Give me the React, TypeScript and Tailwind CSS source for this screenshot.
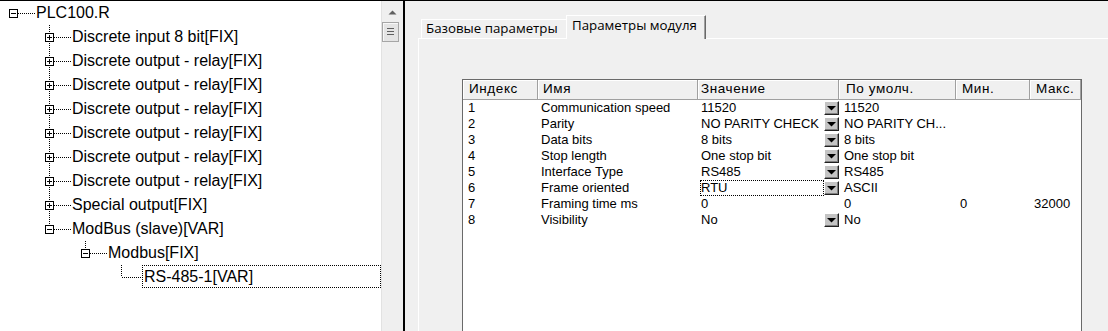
import React from "react";

type Row = {
  label: string;
  level: number;
  box: "plus" | "minus" | null;
  line: "full" | "top" | "none";
  selected?: boolean;
};

const treeRows: Row[] = [
  { label: "PLC100.R", level: 0, box: "minus", line: "none" },
  { label: "Discrete input 8 bit[FIX]", level: 1, box: "plus", line: "full" },
  { label: "Discrete output - relay[FIX]", level: 1, box: "plus", line: "full" },
  { label: "Discrete output - relay[FIX]", level: 1, box: "plus", line: "full" },
  { label: "Discrete output - relay[FIX]", level: 1, box: "plus", line: "full" },
  { label: "Discrete output - relay[FIX]", level: 1, box: "plus", line: "full" },
  { label: "Discrete output - relay[FIX]", level: 1, box: "plus", line: "full" },
  { label: "Discrete output - relay[FIX]", level: 1, box: "plus", line: "full" },
  { label: "Special output[FIX]", level: 1, box: "plus", line: "full" },
  { label: "ModBus (slave)[VAR]", level: 1, box: "minus", line: "top" },
  { label: "Modbus[FIX]", level: 2, box: "minus", line: "top" },
  { label: "RS-485-1[VAR]", level: 3, box: null, line: "top", selected: true },
];

function Connector({ box, line }: { box: Row["box"]; line: Row["line"] }) {
  return (
    <svg width="36" height="24" className="block shrink-0">
      {line !== "none" && (
        <line
          x1="13.5"
          y1="0"
          x2="13.5"
          y2={line === "full" ? 24 : 12}
          stroke="#000"
          strokeDasharray="1 1"
        />
      )}
      <line x1={box ? 18 : 14} y1="12.5" x2={box ? 35 : 34} y2="12.5" stroke="#000" strokeDasharray="1 1" />
      {box && (
        <>
          <rect x="9.5" y="8.5" width="8" height="8" fill="#fff" stroke="#000" />
          <line x1="11" y1="12.5" x2="16" y2="12.5" stroke="#000" />
          {box === "plus" && <line x1="13.5" y1="10" x2="13.5" y2="15" stroke="#000" />}
        </>
      )}
    </svg>
  );
}

function Tree() {
  return (
    <div className="w-[381px] h-full bg-white flex flex-col font-['Liberation_Sans',Arial,sans-serif] text-[16px] text-black">
      {treeRows.map((r, i) => (
        <div key={i} className="h-[24px] flex items-start shrink-0">
          <div style={{ width: r.level * 36 }} className="shrink-0" />
          <Connector box={r.box} line={r.line} />
          {r.selected ? (
            <div className="-ml-[2px] flex-1 h-[23px] border border-dotted border-black pl-[1px] leading-[21px] whitespace-nowrap">
              {r.label}
            </div>
          ) : (
            <div className="leading-[24px] whitespace-nowrap">{r.label}</div>
          )}
        </div>
      ))}
    </div>
  );
}

function Scrollbar() {
  return (
    <div className="w-[22px] h-full bg-[#efefef] border-l border-[#e2e2e2] flex flex-col">
      <div className="h-[21px] flex items-start justify-center pt-[9px]">
        <svg width="9" height="5" className="block">
          <polygon points="0.5,4.5 4.5,0.5 8.5,4.5" fill="#606060" />
        </svg>
      </div>
      <div className="w-[17px] h-[20px] border border-[#a6a6a6] bg-[#e4e4e4] shadow-[inset_1px_1px_0_#f8f8f8] flex flex-col items-center pt-[5px] gap-[2px]">
        <div className="w-[7px] h-[1px] bg-[#5f5f5f]" />
        <div className="w-[7px] h-[1px] bg-[#5f5f5f]" />
        <div className="w-[7px] h-[1px] bg-[#5f5f5f]" />
      </div>
    </div>
  );
}

const colW = [75, 160, 141, 117, 74, 51];
const headers = [
  { t: "Индекс", pl: 6 },
  { t: "Имя", pl: 5 },
  { t: "Значение", pl: 3 },
  { t: "По умолч.", pl: 7 },
  { t: "Мин.", pl: 6 },
  { t: "Макс.", pl: 6 },
];

type PRow = {
  idx: string;
  name: string;
  value: string;
  btn: boolean;
  def: string;
  min?: string;
  max?: string;
  focus?: boolean;
};

const params: PRow[] = [
  { idx: "1", name: "Communication speed", value: "11520", btn: true, def: "11520" },
  { idx: "2", name: "Parity", value: "NO PARITY CHECK", btn: true, def: "NO PARITY CH..." },
  { idx: "3", name: "Data bits", value: "8 bits", btn: true, def: "8 bits" },
  { idx: "4", name: "Stop length", value: "One stop bit", btn: true, def: "One stop bit" },
  { idx: "5", name: "Interface Type", value: "RS485", btn: true, def: "RS485" },
  { idx: "6", name: "Frame oriented", value: "RTU", btn: true, def: "ASCII", focus: true },
  { idx: "7", name: "Framing time ms", value: "0", btn: false, def: "0", min: "0", max: "32000" },
  { idx: "8", name: "Visibility", value: "No", btn: true, def: "No" },
];

function DropBtn() {
  return (
    <div className="w-[15px] h-[14px] mt-[1px] shrink-0 bg-[#c4c4c4] border-t border-l border-white border-r border-b border-r-[#202020] border-b-[#202020] shadow-[inset_-1px_-1px_0_#808080] flex items-center justify-center">
      <svg width="9" height="5" className="block">
        <polygon points="0,0 9,0 4.5,4.5" fill="#000" />
      </svg>
    </div>
  );
}

function ParamTable() {
  return (
    <div className="w-[620px] flex-1 border-l border-t border-r border-[#6a6a6a] bg-white flex flex-col font-['Liberation_Sans',Arial,sans-serif] text-[13px] text-black">
      <div className="h-[20px] flex bg-[#f0f0f0] border-b border-[#a0a0a0] shrink-0">
        {headers.map((h, i) => (
          <div
            key={i}
            style={{ width: colW[i], paddingLeft: h.pl }}
            className="h-full flex items-center border-r border-[#a0a0a0] shadow-[inset_1px_1px_0_#ffffff] whitespace-nowrap shrink-0 text-[13.5px] tracking-[0.6px]"
          >
            {h.t}
          </div>
        ))}
      </div>
      {params.map((p, i) => (
        <div key={i} className="h-[16px] flex leading-[16px] shrink-0">
          <div className="w-[75px] pl-[5px] shrink-0">{p.idx}</div>
          <div className="w-[160px] pl-[3px] shrink-0 whitespace-nowrap">{p.name}</div>
          <div className="w-[141px] pl-[2px] flex shrink-0">
            <div
              className={
                "flex-1 h-[16px] border leading-[14px] whitespace-nowrap " +
                (p.focus ? "border-dotted border-black" : "border-transparent")
              }
            >
              {p.value}
            </div>
            {p.btn ? <DropBtn /> : <div className="w-[15px]" />}
          </div>
          <div className="w-[117px] pl-[5px] shrink-0 whitespace-nowrap">{p.def}</div>
          <div className="w-[74px] pl-[4px] shrink-0">{p.min ?? ""}</div>
          <div className="w-[51px] pl-[4px] shrink-0">{p.max ?? ""}</div>
        </div>
      ))}
    </div>
  );
}

function RightPane() {
  return (
    <div className="flex-1 h-full bg-[#f0f0f0] pl-[13px] flex flex-col">
      <div className="h-[37px] flex items-end pl-[3px] shrink-0 font-['Open_Sans','Noto_Sans',sans-serif] text-[13.3px] text-black">
        <div className="w-[145px] h-[19px] border-l border-t border-white pl-[4px] leading-[17px] whitespace-nowrap">
          Базовые параметры
        </div>
        <div className="relative z-10 w-[140px] h-[24px] -mb-[1px] bg-[#f0f0f0] border-l border-t border-white border-r border-r-[#696969] shadow-[inset_-1px_0_0_#a0a0a0] pl-[5px] leading-[19px] whitespace-nowrap">
          Параметры модуля
        </div>
      </div>
      <div className="flex-1 border-l border-t border-white pl-[43px] pt-[40px] flex flex-col min-h-0">
        <ParamTable />
      </div>
    </div>
  );
}

export default function App() {
  return (
    <div className="w-[1108px] h-[331px] overflow-hidden border-t border-black flex bg-white">
      <Tree />
      <Scrollbar />
      <div className="w-[2px] h-full bg-black shrink-0" />
      <RightPane />
    </div>
  );
}
